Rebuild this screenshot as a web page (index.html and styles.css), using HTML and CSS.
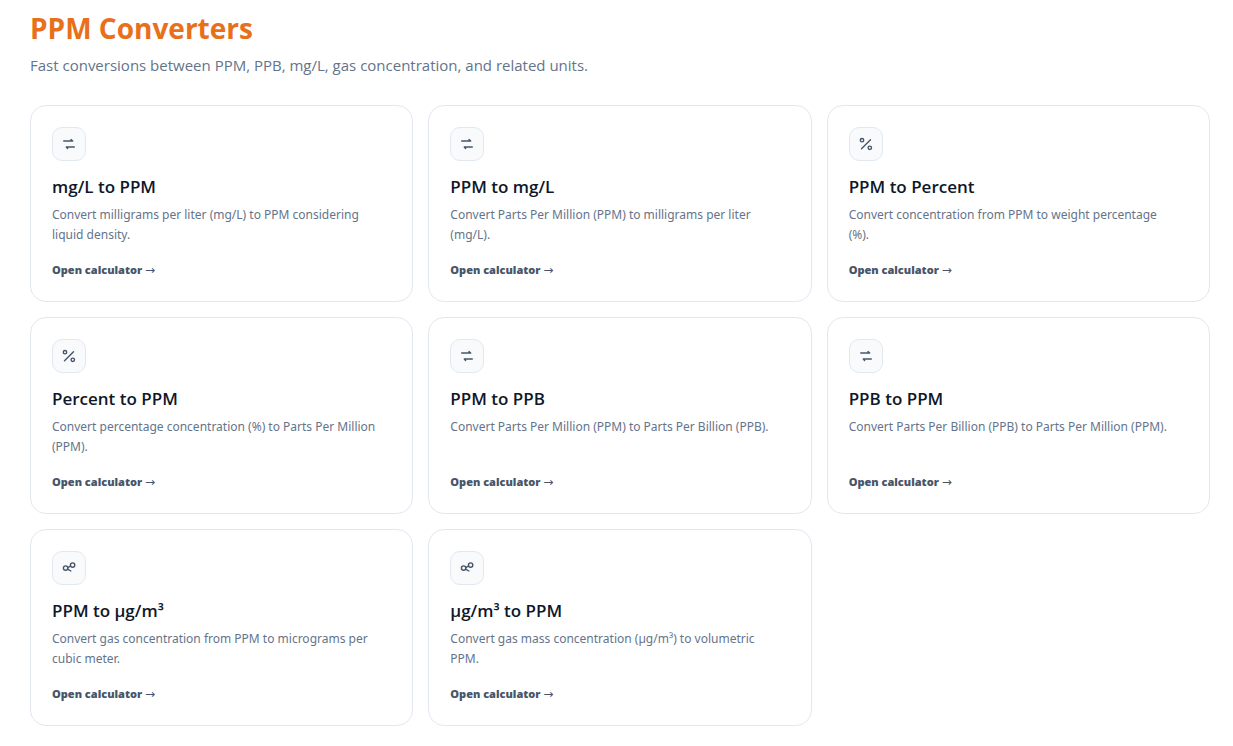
FILE: index.html
```html
<!DOCTYPE html>
<html lang="en">
<head>
<meta charset="utf-8">
<meta name="viewport" content="width=device-width, initial-scale=1">
<title>PPM Converters</title>
<link rel="stylesheet" href="styles.css">
</head>
<body>
<svg class="sprite" aria-hidden="true">
  <symbol id="swap" viewBox="0 0 16 16"><path d="M2.7 5h9L10 3.6M13.3 11h-8L6.6 12.4"/></symbol>
  <symbol id="percent" viewBox="0 0 16 16"><path d="M3.5 12.7l9-9"/><circle cx="4" cy="4.2" r="1.7"/><circle cx="11.8" cy="11.8" r="1.7"/></symbol>
  <symbol id="molecule" viewBox="0 0 16 16"><circle cx="4.6" cy="8.1" r="2.2"/><circle cx="11.6" cy="5.1" r="2.2"/><path d="M6.8 7.6L9.5 6M6.5 9.2l3.4 1.8"/></symbol>
</svg>
<main class="page">
  <header class="intro">
    <h1 class="page-title">PPM Converters</h1>
    <p class="lead">Fast conversions between PPM, PPB, mg/L, gas concentration, and related units.</p>
  </header>
  <div class="grid">
    <a class="card" href="#mgl-to-ppm">
      <span class="badge"><svg class="icon"><use href="#swap"/></svg></span>
      <h2 class="card-title">mg/L to PPM</h2>
      <p class="card-text">Convert milligrams per liter (mg/L) to PPM considering liquid density.</p>
      <span class="card-link">Open calculator <span class="arrow">→</span></span>
    </a>
    <a class="card" href="#ppm-to-mgl">
      <span class="badge"><svg class="icon"><use href="#swap"/></svg></span>
      <h2 class="card-title">PPM to mg/L</h2>
      <p class="card-text">Convert Parts Per Million (PPM) to milligrams per liter (mg/L).</p>
      <span class="card-link">Open calculator <span class="arrow">→</span></span>
    </a>
    <a class="card" href="#ppm-to-percent">
      <span class="badge"><svg class="icon"><use href="#percent"/></svg></span>
      <h2 class="card-title">PPM to Percent</h2>
      <p class="card-text">Convert concentration from PPM to weight percentage (%).</p>
      <span class="card-link">Open calculator <span class="arrow">→</span></span>
    </a>
    <a class="card" href="#percent-to-ppm">
      <span class="badge"><svg class="icon"><use href="#percent"/></svg></span>
      <h2 class="card-title">Percent to PPM</h2>
      <p class="card-text">Convert percentage concentration (%) to Parts Per Million (PPM).</p>
      <span class="card-link">Open calculator <span class="arrow">→</span></span>
    </a>
    <a class="card" href="#ppm-to-ppb">
      <span class="badge"><svg class="icon"><use href="#swap"/></svg></span>
      <h2 class="card-title">PPM to PPB</h2>
      <p class="card-text">Convert Parts Per Million (PPM) to Parts Per Billion (PPB).</p>
      <span class="card-link">Open calculator <span class="arrow">→</span></span>
    </a>
    <a class="card" href="#ppb-to-ppm">
      <span class="badge"><svg class="icon"><use href="#swap"/></svg></span>
      <h2 class="card-title">PPB to PPM</h2>
      <p class="card-text">Convert Parts Per Billion (PPB) to Parts Per Million (PPM).</p>
      <span class="card-link">Open calculator <span class="arrow">→</span></span>
    </a>
    <a class="card" href="#ppm-to-ugm3">
      <span class="badge"><svg class="icon"><use href="#molecule"/></svg></span>
      <h2 class="card-title">PPM to µg/m³</h2>
      <p class="card-text">Convert gas concentration from PPM to micrograms per cubic meter.</p>
      <span class="card-link">Open calculator <span class="arrow">→</span></span>
    </a>
    <a class="card" href="#ugm3-to-ppm">
      <span class="badge"><svg class="icon"><use href="#molecule"/></svg></span>
      <h2 class="card-title">µg/m³ to PPM</h2>
      <p class="card-text">Convert gas mass concentration (µg/m³) to volumetric PPM.</p>
      <span class="card-link">Open calculator <span class="arrow">→</span></span>
    </a>
  </div>
</main>
</body>
</html>
```
FILE: styles.css
```css
* {
  box-sizing: border-box;
}

body {
  margin: 0;
  background: #fff;
  font-family: "Segoe UI", "Open Sans", "Noto Sans", sans-serif;
  color: #0f172a;
}

.sprite {
  position: absolute;
  width: 0;
  height: 0;
}

.page {
  padding: 8px 23px 20px 30px;
}

.page-title {
  margin: 0;
  font-size: 28px;
  line-height: 40px;
  font-weight: 700;
  color: #e8701a;
}

.lead {
  margin: 5px 0 0;
  font-size: 15px;
  line-height: 24px;
  color: #64748b;
}

.grid {
  display: grid;
  grid-template-columns: repeat(3, minmax(0, 1fr));
  gap: 15px;
  margin-top: 28px;
}

.card {
  display: flex;
  flex-direction: column;
  align-items: flex-start;
  min-height: 197px;
  padding: 21px;
  border: 1px solid #e2e8f0;
  border-radius: 16px;
  background: #fff;
  color: inherit;
  text-decoration: none;
}

.badge {
  display: grid;
  place-items: center;
  width: 34px;
  height: 34px;
  border: 1px solid #e2e8f0;
  border-radius: 10px;
  background: #f8fafc;
  color: #475569;
}

.icon {
  width: 16px;
  height: 16px;
  fill: none;
  stroke: currentColor;
  stroke-width: 1.4;
  stroke-linecap: round;
  stroke-linejoin: round;
}

.card-title {
  margin: 14px 0 6px;
  font-size: 17px;
  line-height: 24px;
  font-weight: 600;
}

.card-text {
  margin: 0;
  padding-right: 8px;
  font-family: "Segoe UI", "Noto Sans", sans-serif;
  font-size: 12px;
  line-height: 20px;
  color: #64748b;
}

.card-link {
  margin-top: auto;
  font-size: 11px;
  line-height: 20px;
  font-weight: 800;
  color: #475569;
}

.arrow {
  font-family: "Segoe UI", "DejaVu Sans", sans-serif;
  font-size: 12px;
  font-weight: 400;
}
```
